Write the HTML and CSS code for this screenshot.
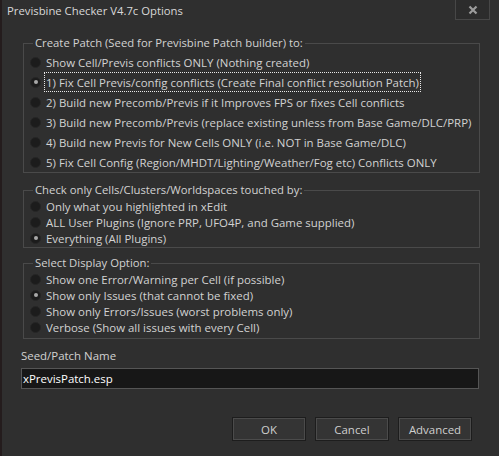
FILE: index.html
```html
<!DOCTYPE html>
<html>
<head>
<meta charset="utf-8">
<link rel="stylesheet" href="styles.css">
</head>
<body>
<div class="window">
  <div class="titlebar">
    <span class="title">Previsbine Checker V4.7c Options</span>
    <div class="close">
      <svg width="10" height="10" viewBox="0 0 10 10"><path d="M1.5 1.5 L8.5 8.5 M8.5 1.5 L1.5 8.5" stroke="#9c9c9c" stroke-width="2.2" fill="none"/></svg>
    </div>
  </div>
  <div class="content">
    <fieldset class="group g1">
      <legend>Create Patch (Seed for Previsbine Patch builder) to:</legend>
      <div class="radio"><span class="dot"></span><span class="text">Show Cell/Previs conflicts ONLY (Nothing created)</span></div>
      <div class="radio checked"><span class="dot"></span><span class="text focus">1) Fix Cell Previs/config conflicts (Create Final conflict resolution Patch)</span></div>
      <div class="radio"><span class="dot"></span><span class="text">2) Build new Precomb/Previs if it Improves FPS or fixes Cell conflicts</span></div>
      <div class="radio"><span class="dot"></span><span class="text">3) Build new Precomb/Previs (replace existing unless from Base Game/DLC/PRP)</span></div>
      <div class="radio"><span class="dot"></span><span class="text">4) Build new Previs for New Cells ONLY (i.e. NOT in Base Game/DLC)</span></div>
      <div class="radio"><span class="dot"></span><span class="text">5) Fix Cell Config (Region/MHDT/Lighting/Weather/Fog etc) Conflicts ONLY</span></div>
    </fieldset>
    <fieldset class="group g2">
      <legend>Check only Cells/Clusters/Worldspaces touched by:</legend>
      <div class="radio"><span class="dot"></span><span class="text">Only what you highlighted in xEdit</span></div>
      <div class="radio"><span class="dot"></span><span class="text">ALL User Plugins (Ignore PRP, UFO4P, and Game supplied)</span></div>
      <div class="radio checked"><span class="dot"></span><span class="text">Everything (All Plugins)</span></div>
    </fieldset>
    <fieldset class="group g3">
      <legend>Select Display Option:</legend>
      <div class="radio"><span class="dot"></span><span class="text">Show one Error/Warning per Cell (if possible)</span></div>
      <div class="radio checked"><span class="dot"></span><span class="text">Show only Issues (that cannot be fixed)</span></div>
      <div class="radio"><span class="dot"></span><span class="text">Show only Errors/Issues (worst problems only)</span></div>
      <div class="radio"><span class="dot"></span><span class="text">Verbose (Show all issues with every Cell)</span></div>
    </fieldset>
    <div class="field-label">Seed/Patch Name</div>
    <div class="input">xPrevisPatch.esp</div>
    <div class="buttons">
      <div class="btn">OK</div>
      <div class="btn">Cancel</div>
      <div class="btn">Advanced</div>
    </div>
  </div>
</div>
</body>
</html>
```
FILE: styles.css
```css
html, body {
  margin: 0;
  padding: 0;
  background: #2f2f2f;
}
body {
  width: 499px;
  height: 456px;
  overflow: hidden;
  font-family: "Open Sans", "Noto Sans", sans-serif;
  font-size: 11.45px;
  color: #d2d2d2;
}
.window {
  box-sizing: border-box;
  width: 499px;
  height: 456px;
  border-left: 2px solid #241c1d;
  background: #2f2f2f;
}
.titlebar {
  display: flex;
  justify-content: space-between;
  align-items: flex-start;
  height: 22px;
}
.title {
  margin-left: 5px;
  margin-top: 3px;
  line-height: 16px;
  font-size: 11.3px;
  color: #d8d8d8;
}
.close {
  box-sizing: border-box;
  width: 35px;
  height: 20px;
  margin-right: 9px;
  border: 1px solid #474747;
  border-top: none;
  background: #2c2c2c;
  display: flex;
  align-items: center;
  justify-content: center;
}
.content {
  padding: 13px 0 0 19px;
}
.group {
  box-sizing: border-box;
  width: 457px;
  margin: 0 0 0 2px;
  padding: 0 0 0 6px;
  border: 1px solid #4a4a4a;
  min-width: 0;
}
.group legend {
  line-height: 16px;
  padding: 0 2px;
  margin-left: 3px;
  font-size: 11.3px;
  color: #d2d2d2;
}
.g1 { padding-top: 1px; }
.g1 .radio { height: 20px; }
.g2 { margin-top: 9px; padding-top: 0; padding-bottom: 1px; }
.g2 .radio { height: 16px; }
.g3 { margin-top: 7px; padding-bottom: 3px; }
.g3 .radio { height: 16px; }
.radio {
  display: flex;
  align-items: center;
}
.dot {
  box-sizing: border-box;
  width: 11px;
  height: 11px;
  border-radius: 50%;
  background: #1c1c1c;
  border: 1px solid #262626;
  flex: none;
  display: flex;
  align-items: center;
  justify-content: center;
}
.checked .dot::after {
  content: "";
  width: 4px;
  height: 4px;
  border-radius: 50%;
  background: #a8a8a8;
}
.text {
  box-sizing: border-box;
  margin-left: 3px;
  padding: 0 1px;
  border: 1px solid transparent;
  height: 100%;
  display: flex;
  align-items: center;
  white-space: nowrap;
}
.text.focus {
  border: 1px dotted #e8e8e8;
}
.field-label {
  margin-top: 9px;
  line-height: 16px;
  margin-left: 0;
}
.input {
  box-sizing: border-box;
  margin-top: 4px;
  width: 458px;
  height: 21px;
  background: #171717;
  border: 1px solid #555555;
  color: #ffffff;
  padding-left: 1px;
  line-height: 19px;
}
.buttons {
  display: flex;
  justify-content: flex-end;
  gap: 9px;
  margin-top: 28px;
  padding-right: 27px;
}
.btn {
  box-sizing: border-box;
  width: 74px;
  height: 24px;
  background: #343434;
  border: 1px solid #1d1d1d;
  box-shadow: inset 0 0 0 1px #4b4b4b;
  color: #cfcfcf;
  display: flex;
  align-items: center;
  justify-content: center;
}
```
